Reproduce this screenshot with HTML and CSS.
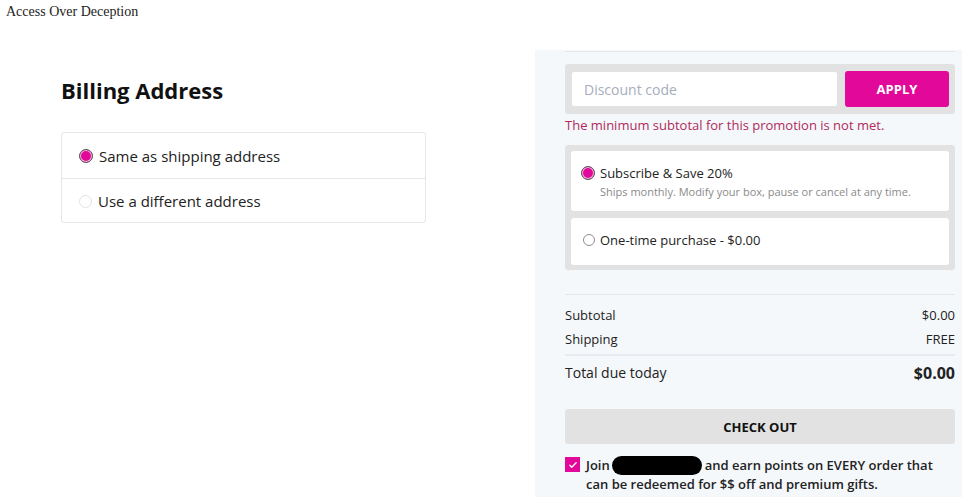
FILE: index.html
```html
<!DOCTYPE html>
<html lang="en">
<head>
    <meta charset="UTF-8">
    <meta name="viewport" content="width=device-width, initial-scale=1.0">
    <title>Checkout</title>
    <link rel="stylesheet" href="styles.css">
</head>
<body>
    <div class="site-title">Access Over Deception</div>

    <div class="checkout">
        <section class="billing">
            <h2 class="billing-title">Billing Address</h2>
            <div class="address-options">
                <label class="address-option">
                    <input type="radio" name="billing" class="radio" checked>
                    <span>Same as shipping address</span>
                </label>
                <label class="address-option">
                    <input type="radio" name="billing" class="radio radio-light">
                    <span>Use a different address</span>
                </label>
            </div>
        </section>

        <aside class="summary">
            <div class="rule rule-top"></div>

            <div class="discount">
                <input type="text" class="discount-input" placeholder="Discount code">
                <button class="apply-button">APPLY</button>
            </div>
            <p class="discount-error">The minimum subtotal for this promotion is not met.</p>

            <div class="plans">
                <label class="plan">
                    <span class="plan-head">
                        <input type="radio" name="plan" class="radio" checked>
                        <span>Subscribe &amp; Save 20%</span>
                    </span>
                    <span class="plan-note">Ships monthly. Modify your box, pause or cancel at any time.</span>
                </label>
                <label class="plan plan-single">
                    <span class="plan-head">
                        <input type="radio" name="plan" class="radio">
                        <span>One-time purchase - $0.00</span>
                    </span>
                </label>
            </div>

            <div class="rule rule-totals"></div>

            <div class="line-item">
                <span>Subtotal</span>
                <span>$0.00</span>
            </div>
            <div class="line-item">
                <span>Shipping</span>
                <span>FREE</span>
            </div>

            <div class="rule rule-total"></div>

            <div class="line-item total">
                <span>Total due today</span>
                <span class="total-amount">$0.00</span>
            </div>

            <button class="checkout-button">CHECK OUT</button>

            <label class="rewards">
                <span class="checkbox">
                    <svg viewBox="0 0 16 16" width="10" height="10">
                        <path d="M3 8.5l3 3 7-7" fill="none" stroke="#fff" stroke-width="2.2" stroke-linecap="round" stroke-linejoin="round"/>
                    </svg>
                </span>
                <span class="rewards-text">Join<span class="redacted"></span>and earn points on EVERY order that<br>can be redeemed for $$ off and premium gifts.</span>
            </label>
        </aside>
    </div>
</body>
</html>
```

FILE: styles.css
```css
:root {
    --magenta: #e1089a;
    --text: #222222;
    --muted: #8a8a8a;
    --panel: #f5f8fb;
    --well: #e2e2e2;
    --rule: #e4e8ed;
}

* {
    box-sizing: border-box;
}

body {
    margin: 0;
    font-family: 'Open Sans', sans-serif;
    color: var(--text);
    background: #ffffff;
}

.site-title {
    font-family: 'Liberation Serif', serif;
    font-size: 14px;
    line-height: 18px;
    padding: 3px 0 0 6px;
    height: 50px;
}

.checkout {
    display: flex;
    min-height: 447px;
}

/* Billing column */

.billing {
    width: 535px;
    padding: 26px 109px 0 61px;
}

.billing-title {
    margin: 0 0 28px;
    font-size: 22px;
    line-height: 28px;
    font-weight: 700;
    color: #111;
}

.address-options {
    border: 1px solid #e6e6e6;
    border-radius: 3px;
}

.address-option {
    display: flex;
    align-items: center;
    gap: 6px;
    height: 45px;
    padding: 1px 17px 0;
    font-size: 15px;
}

.address-option + .address-option {
    border-top: 1px solid #e6e6e6;
    height: 44px;
}

.radio {
    appearance: none;
    -webkit-appearance: none;
    margin: 0;
    width: 13px;
    height: 13px;
    border-radius: 50%;
    border: 1px solid #8d8d8d;
    background: #fff;
    flex: 0 0 auto;
}

.radio:checked {
    border: 1.5px solid #5a5a5a;
    background: var(--magenta);
    box-shadow: inset 0 0 0 1px #f3c6e2;
    width: 14px;
    height: 14px;
}

.radio-light {
    border-color: #e2e2e2;
}

/* Summary column */

.summary {
    flex: 1;
    background: var(--panel);
    padding: 1px 7px 0 30px;
}

.rule {
    border-top: 1px solid var(--rule);
}

.rule-top {
    margin-bottom: 12px;
}

.discount {
    display: flex;
    align-items: center;
    gap: 8px;
    background: var(--well);
    border-radius: 3px;
    padding: 7px 6px 7px 7px;
}

.discount-input {
    flex: 1;
    height: 34px;
    border: none;
    border-radius: 2px;
    padding: 0 12px;
    font-family: inherit;
    font-size: 14px;
    background: #fff;
    outline: none;
}

.discount-input::placeholder {
    color: #a6adbb;
}

.apply-button {
    width: 104px;
    height: 36px;
    border: none;
    border-radius: 3px;
    background: var(--magenta);
    color: #fff;
    font-family: inherit;
    font-size: 13px;
    font-weight: 700;
    cursor: pointer;
}

.discount-error {
    margin: 2px 0 0;
    font-size: 13px;
    line-height: 18px;
    color: #b02a5c;
}

.plans {
    margin-top: 11px;
    background: var(--well);
    border-radius: 3px;
    padding: 6px 6px 5px;
    display: flex;
    flex-direction: column;
    gap: 7px;
}

.plan {
    display: flex;
    flex-direction: column;
    justify-content: center;
    background: #fff;
    border-radius: 3px;
    height: 60px;
    padding: 0 10px;
}

.plan-single {
    height: 47px;
    padding: 0 0 3px 12px;
}

.plan-head {
    display: flex;
    align-items: center;
    gap: 5px;
    font-size: 13px;
    line-height: 18px;
}

.plan-single .radio {
    width: 12px;
    height: 12px;
}

.plan-note {
    margin: 2px 0 0 19px;
    font-size: 11px;
    line-height: 15px;
    color: var(--muted);
}

.rule-totals {
    margin: 24px 0 10px;
}

.line-item {
    display: flex;
    justify-content: space-between;
    align-items: center;
    font-size: 13px;
    line-height: 20px;
}

.line-item + .line-item {
    margin-top: 4px;
}

.rule-total {
    margin: 5px 0 5px;
    border-top-width: 2px;
    border-color: #e8ebef;
}

.total {
    font-size: 14px;
    line-height: 24px;
}

.total-amount {
    font-size: 16px;
    font-weight: 700;
}

.checkout-button {
    display: block;
    width: 100%;
    height: 35px;
    margin-top: 24px;
    border: none;
    border-radius: 3px;
    background: var(--well);
    color: #111;
    font-family: inherit;
    font-size: 13px;
    font-weight: 700;
    cursor: pointer;
}

.rewards {
    display: flex;
    align-items: flex-start;
    gap: 6px;
    margin-top: 12px;
    font-size: 13px;
    line-height: 18px;
    font-weight: 600;
}

.checkbox {
    flex: 0 0 auto;
    display: flex;
    align-items: center;
    justify-content: center;
    width: 15px;
    height: 15px;
    margin-top: 1px;
    background: var(--magenta);
}

.redacted {
    display: inline-block;
    width: 90px;
    height: 19px;
    border-radius: 10px;
    background: #000;
    vertical-align: middle;
    margin: -2px 3px 0 2px;
}
```
